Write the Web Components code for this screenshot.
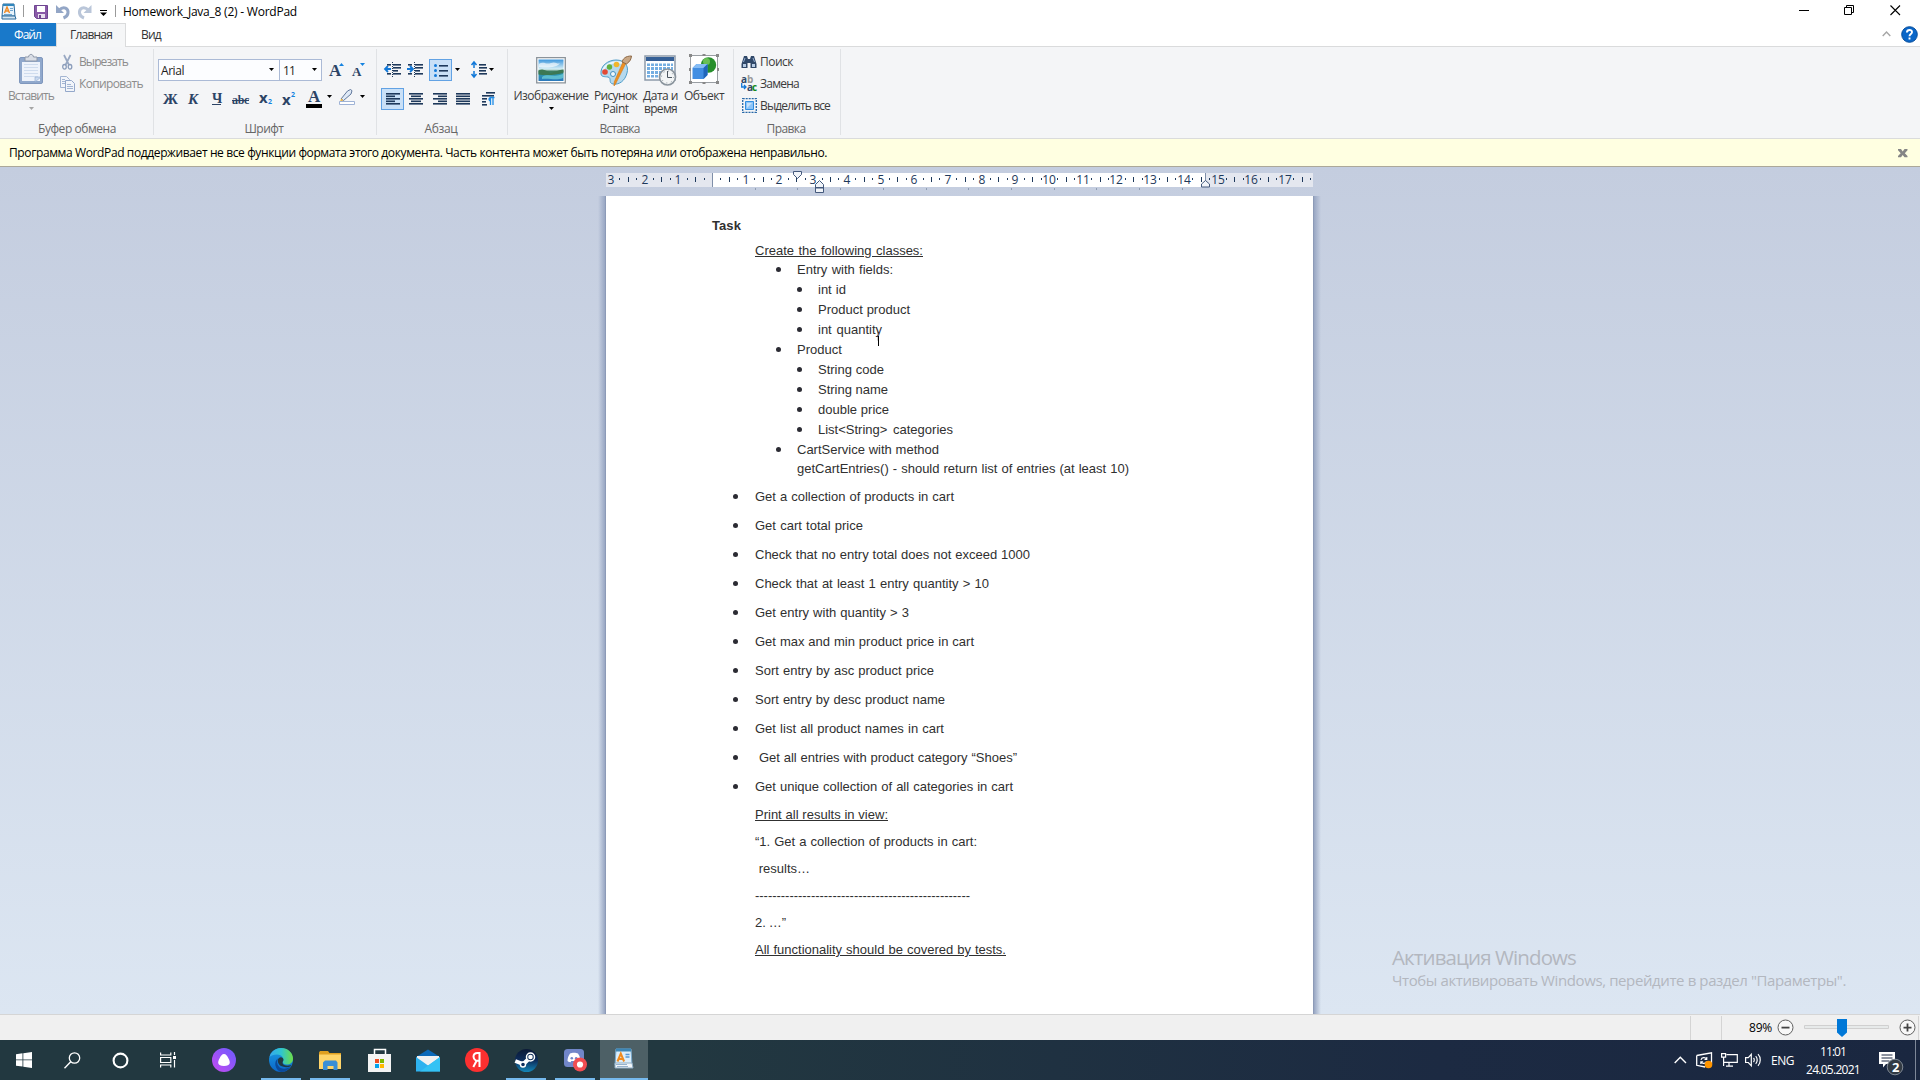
<!DOCTYPE html>
<html lang="ru">
<head>
<meta charset="utf-8">
<title>Homework_Java_8 (2) - WordPad</title>
<style>
html,body{margin:0;padding:0;width:1920px;height:1080px;overflow:hidden;background:#fff}
body{font:12px/17px "Open Sans","Noto Sans",sans-serif;color:#000}
</style>
</head>
<body>
<word-pad></word-pad>
<script>
const ARROW = '<path d="M0 0h5l-2.500 3z"/>';
const bars = (rows, c = '#1e395b') => rows.map(([x, y, w]) => `<rect x="${x}" y="${y}" width="${w}" height="1.600" fill="${c}"/>`).join('');
const ICONS = {
  app: [16,17,'<path d="M2 1h11l1 12H1z" fill="#e8f3fb" stroke="#2a6a9c"/><path d="M2 1h11v2H2z" fill="#2f86bd"/><path d="M3.5 10 6 4l2.5 6M4.5 8h3" stroke="#f08a24" stroke-width="1.4" fill="none"/><path d="M9 5.5h3M9 7.5h3M3 11.5h8" stroke="#6fa5cf"/><path d="M1 13h13l1 3H1z" fill="#d7e6f1" stroke="#2a6a9c"/>'],
  save: [14,14,'<path d="M.5.5h13v13h-11l-2-2z" fill="#8a5aa8" stroke="#6e4590"/><path d="M3 1h8v6H3z" fill="#fff"/><path d="M4 9h7v4H4z" fill="#e8e0ee"/><path d="M5 10h2v3H5z" fill="#6e4590"/>'],
  undo: [14,14,'<path d="M0 0v8h8z" fill="#93a6c6"/><path d="M3 5C8 .5 12.500 3.500 12 8c-.3 2.500-2 4-4.500 5" fill="none" stroke="#93a6c6" stroke-width="3"/>'],
  redo: [14,14,'<path d="M13.500 0v8h-8z" fill="#bac6d9"/><path d="M10.500 5C5.500 .5 1 3.500 1.500 8c.3 2.500 2 4 4.500 5" fill="none" stroke="#bac6d9" stroke-width="3"/>'],
  custom: [7,6,'<path d="M0 0h7v1H0zM0 2.500h7L3.500 6z"/>'],
  min: [11,11,'<path d="M0 5h10v1H0z"/>'],
  restore: [11,11,'<path d="M.5 2.500h7v7h-7zM2.500 2.500v-2h7v7h-2" fill="none" stroke="#000"/>'],
  close: [11,11,'<path d="m.5.5 9.500 9.500m0-9.500L.5 10" fill="none" stroke="#000" stroke-width="1.100"/>'],
  caret: [9,6,'<path d="m.7 5 3.800-4 3.800 4" fill="none" stroke="#a6a6a6" stroke-width="1.400"/>'],
  help: [17,17,'<circle cx="8.500" cy="8.500" r="7.800" fill="#0a66c8" stroke="#064d9c"/><path d="M5.900 6.500C6 3.200 11.200 3.300 11 6.300c-.1 1.700-2.500 1.900-2.500 4M8.500 11.500v2" fill="none" stroke="#fff" stroke-width="1.900"/>'],
  xmsg: [10,9,'<path d="M0 0h3l1.700 2.500L6.500 0h3v1.300L6.800 4.200l2.700 2.700V8.200h-3L4.700 5.900 3 8.200H0V6.900l2.700-2.700L0 1.300z" fill="#858585"/>'],
  paste: [27,31,'<rect x="1.500" y="3.500" width="23" height="26" rx="1.500" fill="#90a8cc" stroke="#7f97bd"/><path d="M4 8h18v19H4z" fill="#eef3fb"/><path d="M6 10.500h14M6 13.500h14M6 16.500h14M6 19.500h14M6 22.500h14" stroke="#cfdcee"/><path d="M7 3h3.500c.5-3.500 4.500-3.500 5 0H19v4H7z" fill="#d9dde5" stroke="#8d97a8"/><path d="M17 28v-5h6z" fill="#c9d9ef" stroke="#8fa8cc" stroke-width=".6"/>'],
  cut: [11,15,'<path d="M2 0l5 10M8.500 0l-5 10" stroke="#98a8c2" stroke-width="1.700"/><ellipse cx="2.500" cy="11.800" rx="1.800" ry="2.300" fill="none" stroke="#8b9dbb" stroke-width="1.300"/><ellipse cx="8" cy="11.800" rx="1.800" ry="2.300" fill="none" stroke="#8b9dbb" stroke-width="1.300"/>'],
  copy: [15,16,'<path d="M.5.5h6l3 3v8h-9zM2 3.500h3M2 5.500h5M2 7.500h3" fill="#f2f5fa" stroke="#a3b5d2"/><path d="M5.500 4.500h6l3 3v8h-9z" fill="#f2f5fa" stroke="#94a8ca"/><path d="M7 8.500h4M7 10.500h6M7 12.500h6" stroke="#a3b5d2"/>'],
  drop: [5,3,ARROW],
  dropg: [5,3,`<g fill="#a5a5a5">${ARROW}</g>`],
  tri: [5,3,'<path d="M0 3h5L2.500 0z" fill="#1583e0"/>'],
  trid: [5,3,'<path d="M0 0h5L2.500 3z" fill="#1583e0"/>'],
  subst: [6,8,'<path d="M.7 0v4H5M3 2l2 2-2 2" fill="none" stroke="#1278d8" stroke-width="1.300"/>'],
  pen: [17,16,'<path d="M2 10 8.500 2l3-1.500L13 1.700 12 5l-7.500 6.500z" fill="#dfe9f6" stroke="#61789c"/><path d="m2.200 9.500-1.200 3 3.400-1.200z" fill="#efb63b"/><path d="M.5 12.500h15v3H.5z" fill="#fff" stroke="#9fb3d6"/>'],
  outdent: [16,15,'<path d="M0 7h6M3 4 0 7l3 3" fill="none" stroke="#1278d8" stroke-width="1.800"/>'+bars([[2,2,4],[8,2,8],[8,5,8],[8,8,5],[2,11,4],[8,11,8]])+'<path d="M7.500 0v15" stroke="#1e395b" stroke-dasharray="1 1"/>'],
  indent: [16,15,'<path d="M0 7h6M3 4l3 3-3 3" fill="none" stroke="#1278d8" stroke-width="1.800"/>'+bars([[1,2,4],[8,2,8],[8,5,8],[8,8,5],[1,11,4],[8,11,8]])+'<path d="M7.500 0v15" stroke="#1e395b" stroke-dasharray="1 1"/>'],
  bullets: [15,13,'<g fill="#1278d8"><circle cx="1.500" cy="1.500" r="1.500"/><circle cx="1.500" cy="6.500" r="1.500"/><circle cx="1.500" cy="11.500" r="1.500"/></g>'+bars([[5,1,9],[5,6,9],[5,11,9]])],
  spacing: [16,17,'<path d="M3 1v6M3 10v6M.5 4 3 1l2.500 3M.5 13 3 16l2.500-3" stroke="#1278d8" stroke-width="1.500" fill="none"/>'+bars([[8,3,7],[8,6,8],[8,9,7],[8,12,8]])],
  left: [14,13,bars([[0,0,14],[0,2.500,9],[0,5,14],[0,7.500,9],[0,10,14]])],
  center: [14,13,bars([[0,0,14],[2,2.500,10],[0,5,14],[2,7.500,10],[0,10,14]])],
  right: [14,13,bars([[0,0,14],[5,2.500,9],[0,5,14],[5,7.500,9],[0,10,14]])],
  just: [14,13,bars([[0,0,14],[0,2.500,14],[0,5,14],[0,7.500,14],[0,10,14]])],
  para: [14,14,bars([[4,0,9],[0,3,12],[0,6,5],[0,9,4],[0,12,5]])+'<path d="M8.500 5v8M11 5v8M12.500 5.500H8" stroke="#1e8be6" stroke-width="1.300"/><path d="M9 5c-3.500-.5-3.500 5 0 4.500z" fill="#1e8be6"/>'],
  image: [30,27,'<defs><linearGradient id="g" x2="0" y2="1"><stop stop-color="#3d96dc"/><stop offset=".45" stop-color="#d8f0f6"/><stop offset=".55" stop-color="#3f7d5d"/><stop offset=".7" stop-color="#2b93b1"/><stop offset="1" stop-color="#2d79bd"/></linearGradient></defs><path d="M.7.700h28.600v25.100H.7z" fill="#fff" stroke="#8b939a" stroke-width="1.300"/><path d="M2.500 2.500h25v21.500h-25z" fill="url(#g)"/><path d="M2.500 13.500c5-3 8 1 12 2 5 0 8-3 13-3v3c-8 3-18 3-25 2z" fill="#3c7854"/><path d="M3 7c5-3 7 1 12-1s6 2 9 0c-3 5-14 5-21 4z" fill="#fff" opacity=".65"/><path d="M6 20c6-4 12 1 21-3v4c-7 3-13 0-21 1z" fill="#7fe0df" opacity=".6"/>'],
  paint: [33,32,'<path d="M2 19C1 11 9 5 17 5c9 0 13 6 11 13-2 8-8 12-14 11-5-1-1-6-5-7-4-.5-6.500 0-7-3z" fill="#b5d9ee" stroke="#4d9cc9"/><path d="M4 15c3-7 12-9 19-7" stroke="#e9f7fd" stroke-width="2" fill="none"/><circle cx="6" cy="17" r="2.800" fill="#e34934"/><circle cx="10.500" cy="12" r="2.700" fill="#62b03f"/><circle cx="17.500" cy="9.500" r="2.800" fill="#f1b62c"/><circle cx="14" cy="19" r="2.500" fill="#eff8fc" stroke="#4790c0"/><path d="M27 8 16.500 29l-1.500 2 .2-4L24 7z" fill="#ee9022" stroke="#d27716" stroke-width=".6"/><path d="M23 7c1-3 3-6 9.500-6-.5 3-1 5-5 8z" fill="#c9a785" stroke="#8c6745"/>'],
  date: [33,31,'<path d="M1 1h30v24H1z" fill="#fff" stroke="#8d9aab" stroke-width="1.500"/><path d="M2 2h28v4H2z" fill="#355f96"/><path d="M3 8.500h26v14H3z" fill="#75aee1"/><path d="M3 11.500h26M3 15.500h26M3 19.500h26M6.500 8v15M10.500 8v15M14.500 8v15M18.500 8v15M22.500 8v15M26.500 8v15" stroke="#fff"/><circle cx="23.500" cy="22" r="8" fill="#f3f5f6" stroke="#8a949d" stroke-width="1.700"/><path d="M23.500 16v6.500H28" stroke="#4c5660" fill="none"/><circle cx="23.500" cy="22" r="6" stroke="#8a949d" fill="none" stroke-dasharray="1 3.700"/>'],
  object: [30,31,'<path d="M1.500 1.500h27v27h-27z" fill="#fff" stroke="#999ea3"/><g fill="#888"><path d="M0 0h3v3H0zM13.500 0h3v2h-3zM27 0h3v3h-3zM0 14h2v3H0zM28 14h2v3h-2zM0 27h3v3H0zM13.500 28h3v2h-3zM27 27h3v3h-3z"/></g><circle cx="19.500" cy="11" r="7.700" fill="#278f2c"/><circle cx="17.500" cy="7.500" r="3.500" fill="#69bf55"/><path d="m3.500 14 4-4h11v11l-4 4h-11z" fill="#428ee2"/><path d="m3.500 14 4-4h11l-4 4z" fill="#85bcf5"/><path d="m14.500 14 4-4v11l-4 4z" fill="#2166ba"/>'],
  find: [16,14,'<path d="M3 1h3l1 3h2l1-3h3l2.500 8v4H9.500V8h-3v5H.5V9z" fill="#304869"/><path d="M2 9h3v3H2zM11 9h3v3h-3z" fill="#b6cbe4"/><path d="M4 3 2.500 7M12 3l1.500 4" stroke="#93add0"/>'],
  selall: [15,15,'<path d="M.700.700h13.600v13.600H.7z" fill="none" stroke="#2768a8" stroke-width="1.300" stroke-dasharray="2 1"/><path d="M3.500 3.500h8v8h-8z" fill="#8dc4f7" stroke="#318ee0"/><path d="M5 5h5L5 10z" fill="#c6e1fb"/>'],
  minus: [17,17,'<circle cx="8.500" cy="8.500" r="7.500" fill="#f8f8f8" stroke="#606060"/><path d="M4.500 7.700h8v1.800h-8z" fill="#444"/>'],
  plus: [17,17,'<circle cx="8.500" cy="8.500" r="7.500" fill="#f8f8f8" stroke="#606060"/><path d="M4.500 7.700h8v1.800h-8zM7.600 4.500h1.800v8H7.600z" fill="#444"/>'],
  slider: [86,18,'<path d="M.5 6.500h84v3H.5z" fill="#e7eaea" stroke="#d0d0d0"/><path d="M33 0h10v13.500L38 18l-5-4.500z" fill="#0078d7"/>'],
  win: [16,16,'<path d="M0 2.200 6.500 1.300v6.200H0zM7.300 1.200 16 0v7.500H7.300zM0 8.300h6.500v6.300L0 13.700zM7.300 8.300H16V16l-8.700-1.200z" fill="#fff"/>'],
  search: [17,17,'<circle cx="10.500" cy="6" r="5.200" fill="none" stroke="#fff" stroke-width="1.300"/><path d="m6.700 9.700-6.200 6.500" stroke="#fff" stroke-width="1.400"/>'],
  cortana: [17,17,'<circle cx="8.500" cy="8.500" r="6.900" fill="none" stroke="#fff" stroke-width="2.100"/>'],
  tasks: [17,16,'<path d="M.6.500v2.500h10.200V.5M.6 15.500V13h10.200v2.500M.6 5.500h10.200v5H.6zM14.500 0v3M14.500 8v7.500" fill="none" stroke="#fff" stroke-width="1.200"/><path d="M13 4h3v3h-3z" fill="#fff"/>'],
  alice: [24,24,'<defs><linearGradient id="g" x1="0" y1="1" x2="1" y2="0"><stop stop-color="#c64af0"/><stop offset="1" stop-color="#6a5cff"/></linearGradient></defs><circle cx="12" cy="12" r="12" fill="url(#g)"/><path d="M12 6c2 0 3 1.500 4.500 4.500C18.500 14 19 18 12 18s-6.500-4-4.500-7.500C9 7.500 10 6 12 6z" fill="#fff"/>'],
  edge: [24,24,'<defs><linearGradient id="a"><stop stop-color="#35a8ef"/><stop offset=".5" stop-color="#2fc5cf"/><stop offset="1" stop-color="#6ede45"/></linearGradient><linearGradient id="b" x2="0" y2="1"><stop stop-color="#1b9de2"/><stop offset="1" stop-color="#0b66c8"/></linearGradient></defs><circle cx="12" cy="12" r="12" fill="url(#b)"/><path d="M.5 9C2 3.500 6.500 0 12 0c7 0 12 5 12 10.500 0 4-3 6-6 6-3.500 0-4.500-1.500-4-3C15 11 13.500 6.500 8 6.500c-3.500 0-6 1-7.500 2.500z" fill="url(#a)"/><path d="M9.500 10c-3 3-1 10.500 5 10.800 3 .2 5-1 6.800-2C19 22.500 15.500 24 12 24c-6-2-8-11-2.500-14z" fill="#0b4a9a"/><path d="M10 10c-2 1.500-1.500 6 2 8 3 1.500 7 1.500 9.700.2.500-.5.300-1.200-.3-.9-3.500 1-7.900 0-7.900-2.500 0-1.600 1-1.600 1-3 0-2-2.500-3.500-4.500-1.800z" fill="#223840"/>'],
  folder: [22,19,'<path d="M0 1.500 1 0h8l1.500 2H22v15H0z" fill="#e0a020"/><path d="M0 3.500h22V18H0z" fill="#ffd56a"/><path d="M4 19v-7.500L6 9.500h11l1.500 2V19h-4v-4h-6v4z" fill="#3a8fd6"/>'],
  store: [23,24,'<path d="M6.500 6V1.500h11V6" fill="none" stroke="#fff" stroke-width="1.500"/><path d="M0 6h23v18H0z" fill="#f3f3f3"/><path d="M7 11h4v4H7z" fill="#f04e23"/><path d="M12 11h4v4h-4z" fill="#7eb900"/><path d="M7 16h4v4H7z" fill="#02a3ee"/><path d="M12 16h4v4h-4z" fill="#ffb900"/>'],
  mail: [24,23,'<path d="M0 8 12 .5 24 8v14H0z" fill="#0c69b8"/><path d="M1 7h22v6l-11 4L1 12z" fill="#f1f1f1"/><path d="M0 8l12 8.500L24 8v14.500H0z" fill="#2eb2ef"/><path d="M1.500 7.500h21L12 14.800z" fill="#f1f1f1"/><path d="M24 8v14.500H4z" fill="#35c5f5" opacity=".8"/>'],
  yandex: [24,24,'<circle cx="12" cy="12" r="12" fill="#fc3030"/><path d="M14.500 19V5H12.500C9.800 5 8.500 6.500 8.500 8.700c0 2 1 3 2.500 4.100h3.500M11.600 12.800 8.300 19" fill="none" stroke="#fff" stroke-width="2"/>'],
  steam: [23,23,'<defs><linearGradient id="g" x2="0" y2="1"><stop stop-color="#0b1936"/><stop offset=".5" stop-color="#0d2d5c"/><stop offset="1" stop-color="#1387b8"/></linearGradient></defs><circle cx="11.500" cy="11.500" r="11.500" fill="url(#g)"/><path d="M.3 12 8 15" stroke="#fff" stroke-width="4"/><path d="M15 8.500 8 15.500" stroke="#fff" stroke-width="4"/><circle cx="15.500" cy="8" r="4" fill="#12305c" stroke="#fff" stroke-width="1.500"/><circle cx="15.500" cy="8" r="2.300" fill="#fff"/><circle cx="8" cy="15.500" r="2.500" fill="#0d2d5c" stroke="#fff" stroke-width="1.400"/>'],
  discord: [22,22,'<rect x="0" y="0" width="20" height="18" rx="3.500" fill="#7186c9"/><path d="M6 4.500c2-1 6-1 8 0 1.800 2.500 2.500 5 2.500 7.500-1.300 1.200-3 1.300-3 1.300l-.8-1.300h-5.400l-.8 1.300S4.800 13.200 3.500 12c0-2.500.7-5 2.500-7.500z" fill="#fff"/><circle cx="7.800" cy="9.300" r="1.300" fill="#7186c9"/><circle cx="12.200" cy="9.300" r="1.300" fill="#7186c9"/><circle cx="16" cy="15.500" r="7" fill="#f04d52"/><circle cx="16" cy="15.500" r="3.100" fill="#fff"/>'],
  wordpad: [20,22,'<path d="M2 1h15l1 16H1z" fill="#dceefa" stroke="#79a9cc"/><path d="M2 .5h15v3H2z" fill="#3d86b5"/><path d="M3.500 13.500 6.800 5.500l3.300 8M4.700 11h4.200" stroke="#f08a1d" stroke-width="2" fill="none"/><path d="M11.500 6.500h4M11.500 9h4" stroke="#5798d4" stroke-width="1.300"/><path d="M1 15h17l1 5H1z" fill="#f1f6fa" stroke="#8fadc4"/><path d="M2 16.500h11M3 18.500h11" stroke="#96b2cc"/>'],
  up: [13,8,'<path d="m.7 7 5.600-5.800L12 7" fill="none" stroke="#fff" stroke-width="1.400"/>'],
  update: [17,17,'<path d="M.7 3.500 15.500.800v11M.7 3.500v9.800l8.500 1.700" fill="none" stroke="#fff" stroke-width="1.300"/><path d="M5 8c.5-3 4.500-3 5.500-.8M10.800 5v2.500H8.500M10.500 9.500c-1 2.500-4.500 2.500-5.500.3M4.800 12V9.700h2.300" fill="none" stroke="#fff" stroke-width="1.100"/><circle cx="12.500" cy="12.500" r="3.800" fill="#ff9500"/>'],
  net: [17,14,'<path d="M5.500 1.600h10.800v7.800H3M.6.600h4v3.500h-4zM2.600 4v9M8 10v3M5 13.200h7" fill="none" stroke="#fff" stroke-width="1.200"/>'],
  sound: [17,14,'<path d="M.6 4.600h2.700l3-3.300v11.500l-3-3.300H.6zM8.500 5c1 1 1 3 0 4M10.700 3.200c2 2 2 5.600 0 7.600M13 1.200c3 3 3 8.600 0 11.600" fill="none" stroke="#fff" stroke-width="1.200"/>'],
  note: [25,25,'<path d="M0 1h16v12H7l-3 3.500V13H0z" fill="#fff"/><path d="M2.500 4h11M2.500 7h11M2.500 10h8" stroke="#1a2740" stroke-width="1.200"/><circle cx="16" cy="16" r="7.800" fill="#323a43" stroke="#7f8894"/>']
};

function define(name, css, html, init) {
  const tpl = document.createElement('template');
  tpl.innerHTML = `<style>${css}</style>${html}`;
  customElements.define(name, class extends HTMLElement {
    connectedCallback() {
      if (this.shadowRoot) return;
      const root = this.attachShadow({ mode: 'open' });
      root.append(tpl.content.cloneNode(true));
      if (init) init(this, root);
    }
  });
}

define('ui-icon', ':host{display:block;flex:none}svg{display:block;overflow:visible}', '', (el, root) => {
  const [w, h, body] = ICONS[el.getAttribute('name')];
  root.innerHTML += `<svg width="${w}" height="${h}" viewBox="0 0 ${w} ${h}">${body}</svg>`;
});

define('title-bar', `
:host{display:flex;height:23px;background:#fff}
i{width:1px;height:12px;background:#9a9a9a;margin-top:5px}
fit-text{margin:3px 0 0 7px}
.sp{flex:1}`, `
<ui-icon name="app" style="margin:3px 0 0 1px"></ui-icon><i style="margin-left:6px"></i>
<ui-icon name="save" style="margin:5px 0 0 10px"></ui-icon>
<ui-icon name="undo" style="margin:5px 0 0 8px"></ui-icon>
<ui-icon name="redo" style="margin:5px 0 0 8px"></ui-icon>
<ui-icon name="custom" style="margin:10px 0 0 8px"></ui-icon><i style="margin-left:8px"></i>
<fit-text w="174">Homework_Java_8 (2) - WordPad</fit-text><div class="sp"></div>
<ui-icon name="min" style="margin:5px 34px 0 0"></ui-icon>
<ui-icon name="restore" style="margin:5px 35px 0 0"></ui-icon>
<ui-icon name="close" style="margin:5px 19px 0 0"></ui-icon>`);

define('tab-strip', `
:host{display:flex;height:24px;border-bottom:1px solid #dadbdc;box-sizing:border-box;background:#fff}
div{box-sizing:border-box;height:24px;padding-top:3px}
.file{width:56px;height:23px;background:#1979ca;color:#fff;padding-left:14px}
.on{width:70px;border:1px solid #dadbdc;border-width:1px 1px 0;background:#f5f6f7;padding:2px 0 0 13px;color:#333}
.view{padding-left:15px;color:#333}
.sp{flex:1}`, `
<div class="file"><fit-text w="27">Файл</fit-text></div>
<div class="on"><fit-text w="42">Главная</fit-text></div>
<div class="view"><fit-text w="20">Вид</fit-text></div>
<div class="sp"></div>
<ui-icon name="caret" style="margin:8px 10px 0 0"></ui-icon>
<ui-icon name="help" style="margin:3px 2px 0 0"></ui-icon>`);

define('ribbon-group', `
:host{display:flex;flex-direction:column;position:relative;box-sizing:border-box;height:91px;color:#3b3b3b}
.body{height:73px;display:flex;flex:none}
.cap{display:flex;justify-content:center;color:#666;padding-right:var(--cap-shift,3px)}
.end{position:absolute;right:0;top:2px;width:1px;height:86px;background:#e0e2e5}`,
`<div class="body"><slot></slot></div><div class="cap"></div><div class="end"></div>`, (el, root) => {
  el.style.width = el.getAttribute('width') + 'px';
  root.querySelector('.cap').innerHTML = `<fit-text w="${el.getAttribute('cw')}">${el.getAttribute('label')}</fit-text>`;
});

define('ribbon-bar', `
:host{display:flex;height:92px;background:#f4f5f7;border-bottom:1px solid #dadbdc;box-sizing:border-box}
.col{display:flex;flex-direction:column}
.c{align-items:center}
.row{display:flex}
.dis{color:#8c8c8c}
.combo{display:flex;box-sizing:border-box;height:22px;border:1px solid #abbad6;background:#fcfdff;color:#1c1c1c;padding:2px 0 0 2px}
.combo ui-icon{margin:6px 4px 0 auto}
.on{box-sizing:border-box;width:23px;height:22px;border:1px solid #62a2e4;background:#c9e0f7;padding:4px 0 0 4px}
.s{font:bold 17px/17px "Liberation Serif",serif;color:#2c4466}
.n{line-height:13px}
`, `
<ribbon-group width="154" cw="78" label="Буфер обмена" style="--cap-shift:0px">
  <div class="col c dis" style="width:46px;margin-left:8px;padding-top:7px">
    <ui-icon name="paste"></ui-icon><fit-text w="46" style="margin-top:2px">Вставить</fit-text><ui-icon name="dropg" style="margin-top:3px"></ui-icon></div>
  <div class="col dis" style="margin:6px 0 0 6px">
    <div class="row" style="height:22px"><ui-icon name="cut" style="margin:2px 0 0 2px"></ui-icon><fit-text w="49" style="margin-left:6px">Вырезать</fit-text></div>
    <div class="row"><ui-icon name="copy" style="margin-top:1px"></ui-icon><fit-text w="64" style="margin-left:4px">Копировать</fit-text></div></div>
</ribbon-group>
<ribbon-group width="223" cw="39" label="Шрифт">
  <div class="col" style="margin-left:4px;padding-top:12px">
    <div class="row"><div class="combo" style="width:122px"><fit-text w="23">Arial</fit-text><ui-icon name="drop" style="margin-right:5px"></ui-icon></div>
      <div class="combo" style="width:42px;border-left-width:0"><fit-text w="12" style="margin-left:1px">11</fit-text><ui-icon name="drop"></ui-icon></div>
      <fit-text class="s" w="12" style="margin:3px 0 0 7px">А</fit-text><ui-icon name="tri" style="margin:4px 0 0 -2px"></ui-icon>
      <fit-text class="s" w="9" style="font-size:13px;margin:4px 0 0 8px">А</fit-text><ui-icon name="trid" style="margin:4px 0 0 -1px"></ui-icon></div>
    <div class="row" style="height:24px;margin-top:8px;padding-top:2px">
      <fit-text class="s" w="13" style="font-size:15px;margin:0 0 0 5px">Ж</fit-text>
      <fit-text class="s" w="11" style="font-size:15px;font-style:italic;margin:0 0 0 12px">К</fit-text>
      <fit-text class="s" w="9" style="font-size:14px;margin:-1px 0 0 13px;text-decoration:underline">Ч</fit-text>
      <fit-text class="s" w="17" style="font-size:12px;margin:1px 0 0 11px;text-decoration:line-through">abc</fit-text>
      <fit-text class="s" w="9" style="font:bold 15px/15px 'Open Sans';margin:-1px 0 0 10px">x</fit-text><fit-text w="4" style="font:bold 7px/8px 'Open Sans';color:#1583e0;margin:7px 0 0 0">2</fit-text>
      <fit-text class="s" w="9" style="font:bold 15px/15px 'Open Sans';margin:1px 0 0 10px">x</fit-text><fit-text w="4" style="font:bold 7px/8px 'Open Sans';color:#1583e0;margin:0">2</fit-text>
      <div class="col c" style="width:16px;margin-left:11px"><fit-text class="s" w="12" style="line-height:15px;margin-top:-2px">А</fit-text><div style="width:16px;height:4px;background:#000;margin-top:0"></div></div>
      <ui-icon name="drop" style="margin:4px 0 0 5px"></ui-icon>
      <ui-icon name="pen" style="margin:-2px 0 0 7px"></ui-icon><ui-icon name="drop" style="margin:4px 0 0 4px"></ui-icon></div></div>
</ribbon-group>
<ribbon-group width="131" cw="33" label="Абзац">
  <div class="col" style="margin-left:4px;padding-top:12px">
    <div class="row"><ui-icon name="outdent" style="margin:3px 0 0 4px"></ui-icon><ui-icon name="indent" style="margin:3px 0 0 6px"></ui-icon>
      <div class="on" style="margin-left:6px"><ui-icon name="bullets"></ui-icon></div><ui-icon name="drop" style="margin:9px 0 0 3px"></ui-icon>
      <ui-icon name="spacing" style="margin:2px 0 0 11px"></ui-icon><ui-icon name="drop" style="margin:9px 0 0 2px"></ui-icon></div>
    <div class="row" style="margin-top:7px"><div class="on"><ui-icon name="left"></ui-icon></div>
      <ui-icon name="center" style="margin:5px 0 0 5px"></ui-icon><ui-icon name="right" style="margin:5px 0 0 10px"></ui-icon><ui-icon name="just" style="margin:5px 0 0 9px"></ui-icon><ui-icon name="para" style="margin:4px 0 0 12px"></ui-icon></div></div>
</ribbon-group>
<ribbon-group width="226" cw="40" label="Вставка">
  <div class="col c" style="margin-left:6px;width:74px;padding-top:10px"><ui-icon name="image"></ui-icon><fit-text w="75" style="margin-top:3px">Изображение</fit-text><ui-icon name="drop" style="margin-top:3px"></ui-icon></div>
  <div class="col c" style="margin-left:6px;width:43px;padding-top:8px"><ui-icon name="paint"></ui-icon><fit-text class="n" w="43" style="margin-top:2px">Рисунок</fit-text><fit-text class="n" w="26">Paint</fit-text></div>
  <div class="col c" style="margin-left:6px;width:35px;padding-top:8px"><ui-icon name="date"></ui-icon><fit-text class="n" w="35" style="margin-top:3px">Дата и</fit-text><fit-text class="n" w="33">время</fit-text></div>
  <div class="col c" style="margin-left:6px;width:40px;padding-top:7px"><ui-icon name="object"></ui-icon><fit-text w="40" style="margin-top:2px">Объект</fit-text></div>
</ribbon-group>
<ribbon-group width="107" cw="39" label="Правка">
  <div class="col" style="margin:6px 0 0 7px">
    <div class="row" style="height:22px"><ui-icon name="find" style="margin-top:2px"></ui-icon><fit-text w="33" style="margin-left:3px">Поиск</fit-text></div>
    <div class="row" style="height:22px"><div class="col" style="width:16px;font:bold 10px/8px 'Open Sans';color:#304869">
      <div class="row"><fit-text w="6">a</fit-text><fit-text w="5" style="color:#999">b</fit-text></div>
      <div class="row"><ui-icon name="subst"></ui-icon><fit-text w="5">a</fit-text><fit-text w="5" style="color:#168a1c">c</fit-text></div></div><fit-text w="39" style="margin-left:3px">Замена</fit-text></div>
    <div class="row"><ui-icon name="selall" style="margin:1px 0 0 1px"></ui-icon><fit-text w="70" style="margin-left:3px">Выделить все</fit-text></div></div>
</ribbon-group>`);

define('message-bar', `
:host{display:flex;height:28px;box-sizing:border-box;background:#ffffe1;border-bottom:1px solid #aca899;padding:5px 12px 0 9px;justify-content:space-between}`,
`<fit-text w="818">Программа WordPad поддерживает не все функции формата этого документа. Часть контента может быть потеряна или отображена неправильно.</fit-text><ui-icon name="xmsg" style="margin-top:5px"></ui-icon>`);

define('doc-ruler', ':host{display:block;height:29px}svg{display:block;margin:0 auto 0 606px}', '', (el, root) => {
  const cm = 33.7, zero = 106;
  let s = '<rect y="6" width="707" height="14" fill="#e4e7ef"/><rect x="106" y="6" width="493" height="14" fill="#fff"/><path d="M106.500 6v14M599.500 6v8" stroke="#7f8fa9"/>';
  for (let q = -12; q <= 71; q++) {
    const x = Math.round(zero + q * cm / 4);
    if (x < 0 || x > 706 || q === 0) continue;
    if (q % 4 === 0) s += `<text x="${x}" y="17" text-anchor="middle">${Math.abs(q / 4)}</text>`;
    else if (q % 2 === 0) s += `<rect x="${x}" y="10" width="1" height="5"/>`;
    else s += `<rect x="${x}" y="11" width="1" height="2"/>`;
  }
  for (const x of [755,797,840,883,926,968,1011,1054,1096,1139,1182]) s += `<rect x="${x-606}" y="21" width="1" height="2" fill="#8f9db3"/>`;
  s += '<g fill="#f1f4f9" stroke="#44597c"><path d="M187.500 4.500h8v3l-4 4-4-4z"/><path d="M209.500 21v-3.500l4-4 4 4V21zM209.500 20.500h8v5h-8z"/><path d="M595.500 20v-3l4-3.500 4 3.500v3z"/></g>';
  root.innerHTML += `<svg width="708" height="29" fill="#1e395b" font-size="12">${s}</svg>`;
});

define('doc-line', `
:host{display:flex;height:15px;color:#303030;font:13px/15px "Liberation Sans",Arial,sans-serif}
i{width:5px;height:5px;border-radius:50%;background:#2b2b33;margin-top:5px;flex:none;display:none}
:host([b]) i{display:block}`, '<i></i><slot></slot>');

const LINES = [
  // baseline, left, width, text, bullet x, style
  [230,712,29,'Task',0,'font-weight:bold'],
  [255,755,168,'Create the following classes:',0,'u'],
  [274,797,96,'Entry with fields:',776],
  [294,818,28,'int id',797],
  [314,818,92,'Product product',797],
  [334,818,64,'int quantity',797],
  [354,797,45,'Product',776],
  [374,818,66,'String code',797],
  [394,818,70,'String name',797],
  [414,818,71,'double price',797],
  [434,818,135,'List&lt;String&gt; categories',797],
  [454,797,142,'CartService with method',776],
  [473,797,332,'getCartEntries() - should return list of entries (at least 10)',0],
  [501,755,199,'Get a collection of products in cart',733],
  [530,755,108,'Get cart total price',733],
  [559,755,275,'Check that no entry total does not exceed 1000',733],
  [588,755,234,'Check that at least 1 entry quantity &gt; 10',733],
  [617,755,154,'Get entry with quantity &gt; 3',733],
  [646,755,219,'Get max and min product price in cart',733],
  [675,755,179,'Sort entry by asc product price',733],
  [704,755,190,'Sort entry by desc product name',733],
  [733,755,189,'Get list all product names in cart',733],
  [762,755,262,' Get all entries with product category “Shoes”',733],
  [791,755,258,'Get unique collection of all categories in cart',733],
  [819,755,133,'Print all results in view:',0,'u'],
  [846,755,222,'“1. Get a collection of products in cart:',0],
  [873,755,55,' results…',0],
  [900,755,215,'--------------------------------------------------',0],
  [927,755,31,'2. …”',0],
  [954,755,251,'All functionality should be covered by tests.',0,'u']
];

define('doc-page', `
:host{display:block;height:818px;width:707px;margin-left:606px;background:#fff;position:relative;box-sizing:border-box}
:host::before,:host::after{content:"";position:absolute;top:0;bottom:0;width:8px}
:host::before{left:-8px;background:linear-gradient(90deg,#9aa8c400,#9aa8c4 85%,#8391ae)}
:host::after{right:-8px;background:linear-gradient(90deg,#8391ae,#9aa8c4 15%,#9aa8c400)}
.caret{position:absolute;left:272px;top:140px;width:1px;height:10px;background:#000;box-shadow:-1px -5px 0 -.4px #000}
`, '<div class="txt"></div><div class="caret"></div>', (el, root) => {
  let prev = 196 - 3, out = '';
  for (const [y, x, w, t, b, st] of LINES) {
    const mt = y - 12 - (prev + 3);
    const css = st === 'u' ? 'text-decoration:underline;text-underline-offset:1px' : (st || '');
    const start = (b || x) - 606;
    out += `<doc-line ${b ? 'b' : ''} style="padding:${mt}px 0 0 ${start}px"><fit-text mode="word" w="${w}" style="${b ? `margin-left:${x - b - 5}px;` : ''}${css}">${t}</fit-text></doc-line>`;
    prev = y;
  }
  root.querySelector('.txt').innerHTML = out;
});

define('work-area', `
:host{display:block;height:847px;background:linear-gradient(#c4cddf,#dce6f2);position:relative;overflow:hidden}
.wm{position:absolute;left:1392px;top:777px;color:#b3b7bf}
fit-text{display:block}
.a{font-size:20.500px;line-height:27px}.b{font-size:15px;line-height:19px}`, `
<doc-ruler></doc-ruler><doc-page></doc-page>
<div class="wm"><fit-text class="a" w="184">Активация Windows</fit-text><fit-text class="b" w="454">Чтобы активировать Windows, перейдите в раздел "Параметры".</fit-text></div>`);

define('status-bar', `
:host{display:flex;height:26px;box-sizing:border-box;border-top:1px solid #d5d5d5;background:#f0f0f0}
i{width:1px;height:24px;background:#d4d4d4;margin-top:1px}`, `
<i style="margin-left:1690px"></i><i style="margin-left:30px"></i>
<fit-text w="23" style="margin:4px 0 0 27px">89%</fit-text>
<ui-icon name="minus" style="margin:4px 0 0 5px"></ui-icon>
<ui-icon name="slider" style="margin:4px 0 0 10px"></ui-icon>
<ui-icon name="plus" style="margin:4px 0 0 9px"></ui-icon><i style="margin-left:2px"></i>`);

define('task-button', `
:host{display:flex;width:48px;height:40px;align-items:center;justify-content:center;box-sizing:border-box;flex:none}
:host([run]){background:linear-gradient(#76b9ed,#76b9ed) bottom/40px 2px no-repeat}
:host([active]){background:linear-gradient(#76b9ed,#76b9ed) bottom/48px 2px no-repeat #4d6066}`, '<slot></slot>');

define('task-bar', `
:host{display:flex;height:40px;background:linear-gradient(90deg,#223840 0 35%,#1c2a42 75%,#1a2740);color:#fff}
.apps{display:flex;gap:1px;margin-left:9px}
.tray{display:flex;align-items:center;margin-left:auto}
.clock{display:flex;flex-direction:column;align-items:center;width:56px;margin-left:11px;line-height:18px;padding-top:1px}
.note{display:flex;margin:7px 0 0 18px}
.note fit-text{font:bold 13px/16px "Open Sans";margin:8px 0 0 -12px}
i{width:1px;height:40px;background:#7d8798;margin:0 4px 0 16px}`, `
<task-button><ui-icon name="win"></ui-icon></task-button><task-button><ui-icon name="search"></ui-icon></task-button>
<task-button><ui-icon name="cortana"></ui-icon></task-button><task-button><ui-icon name="tasks"></ui-icon></task-button>
<task-button style="margin-left:8px"><ui-icon name="alice"></ui-icon></task-button>
<div class="apps">
<task-button run><ui-icon name="edge"></ui-icon></task-button><task-button run><ui-icon name="folder"></ui-icon></task-button>
<task-button><ui-icon name="store"></ui-icon></task-button><task-button><ui-icon name="mail"></ui-icon></task-button>
<task-button><ui-icon name="yandex"></ui-icon></task-button><task-button run><ui-icon name="steam"></ui-icon></task-button>
<task-button run><ui-icon name="discord"></ui-icon></task-button><task-button active><ui-icon name="wordpad" style="margin-top:-2px"></ui-icon></task-button></div>
<div class="tray"><ui-icon name="up"></ui-icon><ui-icon name="update" style="margin-left:9px"></ui-icon><ui-icon name="net" style="margin-left:8px"></ui-icon><ui-icon name="sound" style="margin-left:7px"></ui-icon>
<fit-text w="23" style="margin-left:9px">ENG</fit-text>
<div class="clock"><fit-text w="26">11:01</fit-text><fit-text w="54">24.05.2021</fit-text></div>
<div class="note"><ui-icon name="note"></ui-icon><fit-text w="7">2</fit-text></div><i></i></div>`);

define('word-pad', ':host{display:flex;flex-direction:column;width:1920px;height:1080px}:host>*{flex:none}', `
<title-bar></title-bar><tab-strip></tab-strip><ribbon-bar></ribbon-bar><message-bar></message-bar>
<work-area></work-area><status-bar></status-bar><task-bar></task-bar>`);

// Spreads its text over exactly w pixels by tuning letter or word spacing.
define('fit-text', ':host{display:block;white-space:pre;flex:none}span{display:inline-block;vertical-align:top;text-decoration:inherit}', '<span><slot></slot></span>', (el, root) => {
  const span = root.querySelector('span'), w = +el.getAttribute('w'), t = el.textContent;
  const diff = w - span.getBoundingClientRect().width, gaps = t.split(' ').length - 1;
  if (el.getAttribute('mode') === 'word' && gaps) span.style.wordSpacing = diff / gaps + 'px';
  else span.style.letterSpacing = diff / t.length + 'px';
  el.style.width = w + 'px';
});
</script>
</body>
</html>
